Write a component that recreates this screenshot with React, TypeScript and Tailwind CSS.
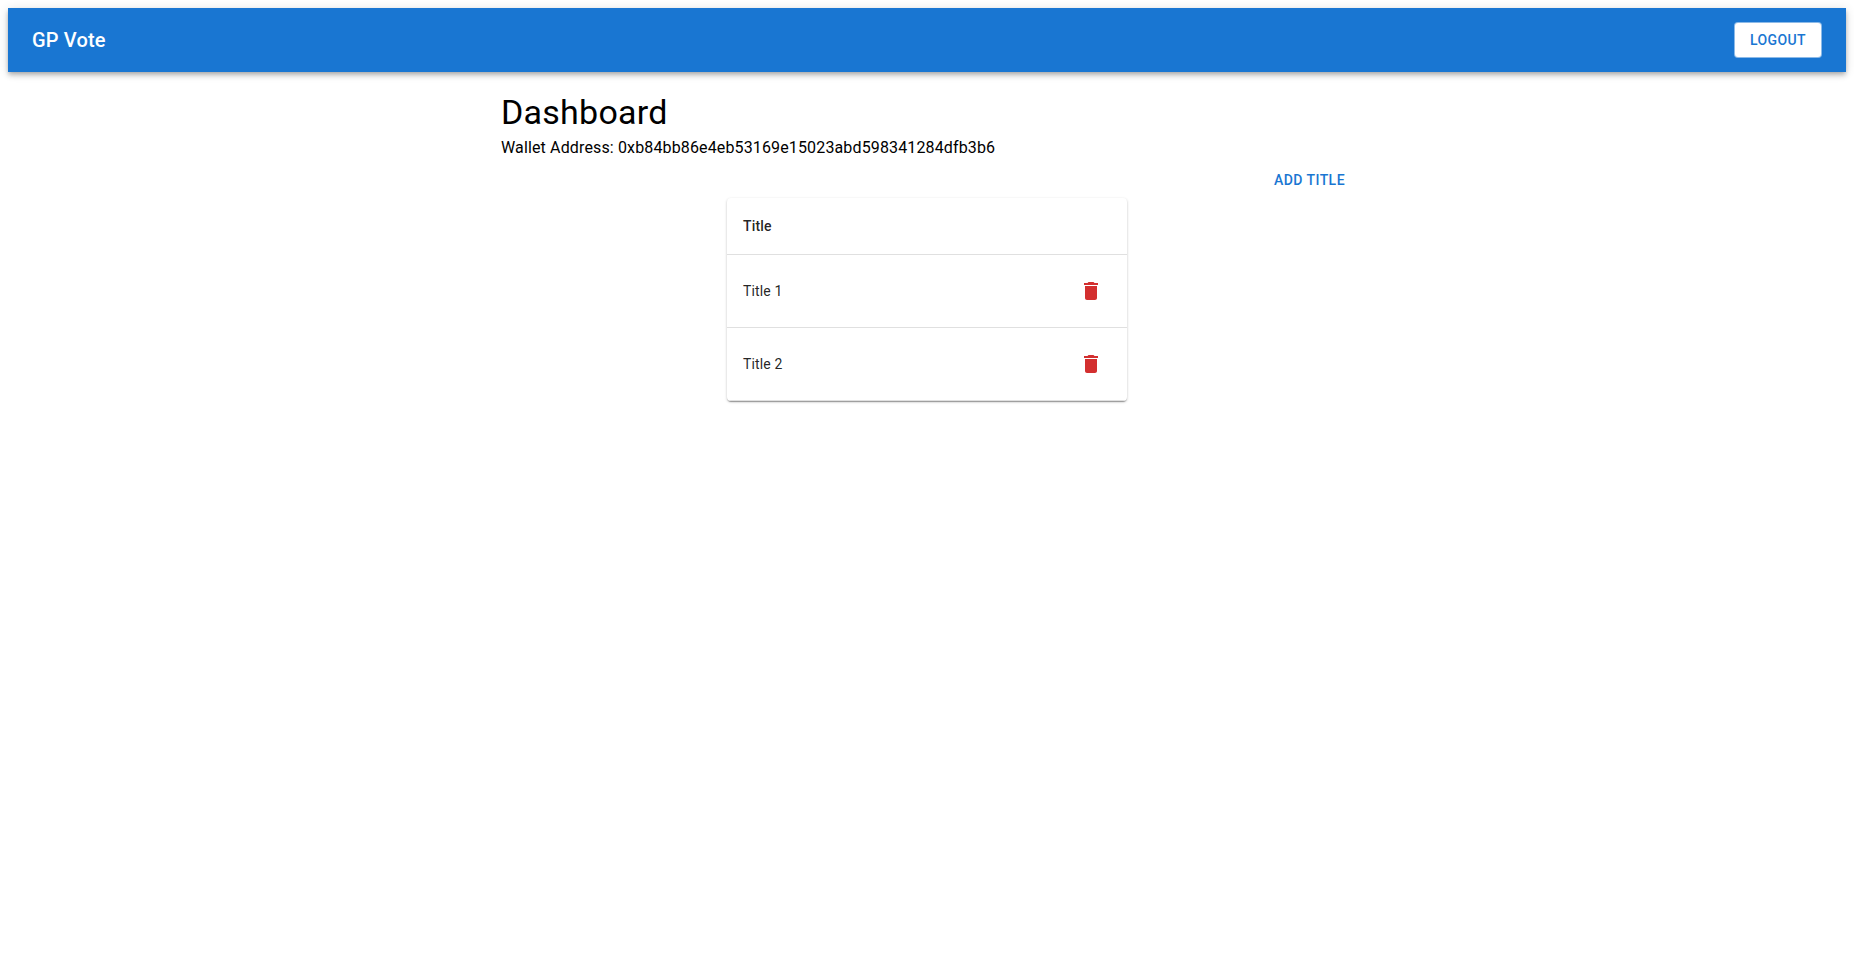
const TITLES = ["Title 1", "Title 2"];

function DeleteIcon() {
  return (
    <svg viewBox="0 0 24 24" className="size-6 fill-current" aria-hidden="true">
      <path d="M6 19c0 1.1.9 2 2 2h8c1.1 0 2-.9 2-2V7H6v12zM19 4h-3.5l-1-1h-5l-1 1H5v2h14V4z" />
    </svg>
  );
}

export default function App() {
  return (
    <div className="p-2 font-['Roboto',sans-serif] text-black">
      <header className="flex h-16 items-center justify-between bg-[#1976d2] px-6 text-white shadow-[0px_2px_4px_-1px_rgba(0,0,0,0.2),0px_4px_5px_0px_rgba(0,0,0,0.14),0px_1px_10px_0px_rgba(0,0,0,0.12)]">
        <h6 className="text-[20px] leading-8 font-medium tracking-[0.15px]">GP Vote</h6>
        <button className="rounded border border-[#1976d2]/50 bg-white px-[15px] py-[5px] text-[14px] leading-[24.5px] font-medium tracking-[0.4px] text-[#1976d2] uppercase">
          Logout
        </button>
      </header>
      <main className="mx-auto w-[852px] pt-[19px]">
        <h4 className="text-[34px] leading-[42px] tracking-[0.25px]">Dashboard</h4>
        <p className="mt-[3px] text-[16px] leading-6 tracking-[0.14px]">
          Wallet Address: 0xb84bb86e4eb53169e15023abd598341284dfb3b6
        </p>
        <div className="mt-[1.5px] flex justify-end">
          <button className="rounded px-2 py-1.5 text-[14px] leading-[24.5px] font-medium tracking-[0.45px] text-[#1976d2] uppercase">
            Add Title
          </button>
        </div>
        <div className="mx-auto w-[400px] overflow-hidden rounded bg-white shadow-[0px_2px_1px_-1px_rgba(0,0,0,0.2),0px_1px_1px_0px_rgba(0,0,0,0.14),0px_1px_3px_0px_rgba(0,0,0,0.2)]">
          <table className="w-full border-separate border-spacing-0 text-left text-[14px] tracking-[0.15px] text-black/87">
            <thead>
              <tr>
                <th className="border-b border-[#e0e0e0] p-4 leading-6 font-medium" colSpan={2}>Title</th>
              </tr>
            </thead>
            <tbody>
              {TITLES.map((title) => (
                <tr key={title}>
                  <td className="border-b border-[#e0e0e0] p-4 leading-5">{title}</td>
                  <td className="border-b border-[#e0e0e0] p-4 text-right">
                    <button className="inline-flex rounded-full p-2 align-middle text-[#d32f2f]" aria-label={`Delete ${title}`}>
                      <DeleteIcon />
                    </button>
                  </td>
                </tr>
              ))}
            </tbody>
          </table>
        </div>
      </main>
    </div>
  );
}
